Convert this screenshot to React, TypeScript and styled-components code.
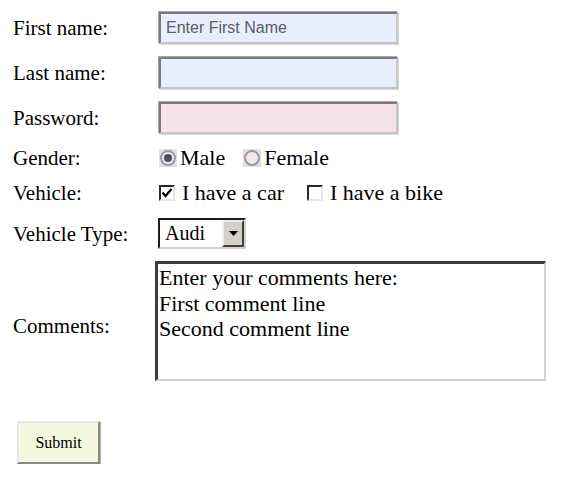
import React from "react";
import styled, { createGlobalStyle } from "styled-components";

const Global = createGlobalStyle`
  html, body { margin: 0; padding: 0; background: #fff; }
  body { font-family: "Liberation Serif", "Times New Roman", serif; color: #000; }
`;

const Form = styled.form`
  display: flex;
  flex-direction: column;
  padding: 12px 0 0 13px;
  width: 560px;
  box-sizing: border-box;
`;

const Row = styled.div<{ $h: number; $mt?: number }>`
  display: grid;
  grid-template-columns: 142px 1fr;
  align-items: center;
  height: ${(p) => p.$h}px;
  margin-top: ${(p) => p.$mt ?? 0}px;
`;

const Label = styled.span<{ $shift?: number }>`
  font-size: 21px;
  line-height: 24px;
  position: relative;
  top: ${(p) => p.$shift ?? 0}px;
`;

const Field = styled.div<{ $ml?: number }>`
  display: flex;
  align-items: center;
  margin-left: ${(p) => p.$ml ?? 0}px;
`;

const TextInput = styled.input<{ $bg: string }>`
  box-sizing: border-box;
  width: 239px;
  height: 32px;
  margin: 0;
  padding: 0 5px;
  background: ${(p) => p.$bg};
  border: 2px solid;
  border-color: #7a7a7a #c6c6c6 #c6c6c6 #7a7a7a;
  box-shadow: -1px -1px 0 #a8a8a8, 1px 1px 0 #d8d8d8;
  font-family: "Liberation Sans", Arial, sans-serif;
  font-size: 16px;
  color: #000;
  outline: none;
  &::placeholder { color: #5c5c66; opacity: 1; }
`;

const Choice = styled.label<{ $gap?: number }>`
  display: inline-flex;
  align-items: center;
  font-size: 22px;
  line-height: 24px;
  margin-right: ${(p) => p.$gap ?? 0}px;
`;

const RadioBox = styled.span<{ $fill: string }>`
  box-sizing: border-box;
  width: 18px;
  height: 18px;
  margin-right: 3px;
  display: inline-flex;
  align-items: center;
  justify-content: center;
  background: #dfe0ea;
  &::before {
    content: "";
    box-sizing: border-box;
    width: 16px;
    height: 16px;
    border-radius: 50%;
    border: 2px solid #9a9aa2;
    background: ${(p) => p.$fill};
  }
`;

const RadioDot = styled.span`
  position: absolute;
  left: 5px;
  top: 5px;
  width: 8px;
  height: 8px;
  border-radius: 50%;
  background: #4e4e56;
`;

const RadioWrap = styled.span`
  position: relative;
  display: inline-flex;
  align-items: center;
  justify-content: center;
`;

const CheckBox = styled.span`
  box-sizing: border-box;
  width: 16px;
  height: 16px;
  margin-right: 7px;
  background: #fff;
  border: 2px solid;
  border-color: #2a2a2a #e6e6e6 #e6e6e6 #2a2a2a;
  display: inline-flex;
  align-items: center;
  justify-content: center;
`;

const Select = styled.div`
  box-sizing: border-box;
  width: 88px;
  height: 31px;
  display: flex;
  align-items: center;
  border: 2px solid;
  border-color: #1e1e1e #d4d0c8 #d4d0c8 #1e1e1e;
  background: #fff;
`;

const SelectText = styled.span`
  flex: 1;
  padding-left: 5px;
  font-size: 20px;
  line-height: 23px;
`;

const ArrowButton = styled.span`
  box-sizing: border-box;
  width: 22px;
  height: 27px;
  background: #d4d0c8;
  border: 2px solid;
  border-color: #f0eee8 #404040 #404040 #f0eee8;
  display: flex;
  align-items: center;
  justify-content: center;
`;

const TextArea = styled.textarea`
  box-sizing: border-box;
  width: 391px;
  height: 120px;
  margin: 0;
  padding: 1px 1px;
  resize: none;
  border: solid;
  border-color: #3c3c3c #d4d0c8 #d4d0c8 #3c3c3c;
  border-width: 3px 2px 2px 3px;
  font-family: "Liberation Serif", "Times New Roman", serif;
  font-size: 22px;
  line-height: 25.5px;
  color: #000;
  outline: none;
  overflow: hidden;
`;

const SubmitButton = styled.button`
  box-sizing: border-box;
  width: 83px;
  height: 43px;
  margin-left: 4px;
  background: #f4f8de;
  border: 2px solid;
  border-color: #e8e8e0 #8a8a84 #8a8a84 #e8e8e0;
  box-shadow: 1px 1px 0 #b0b0a8;
  font-family: "Liberation Serif", "Times New Roman", serif;
  font-size: 16px;
  color: #000;
  padding: 0;
`;

const Radio = ({ checked, fill }: { checked?: boolean; fill: string }) => (
  <RadioWrap>
    <RadioBox $fill={fill} />
    {checked && <RadioDot />}
  </RadioWrap>
);

export default function App() {
  return (
    <>
      <Global />
      <Form onSubmit={(e) => e.preventDefault()}>
        <Row $h={32}>
          <Label>First name:</Label>
          <Field $ml={4}>
            <TextInput $bg="#e8eefe" placeholder="Enter First Name" />
          </Field>
        </Row>
        <Row $h={32} $mt={13}>
          <Label>Last name:</Label>
          <Field $ml={4}>
            <TextInput $bg="#e8eefe" />
          </Field>
        </Row>
        <Row $h={32} $mt={13}>
          <Label>Password:</Label>
          <Field $ml={4}>
            <TextInput $bg="#f6e2ea" type="password" />
          </Field>
        </Row>
        <Row $h={23} $mt={12}>
          <Label>Gender:</Label>
          <Field $ml={4}>
            <Choice $gap={18}>
              <Radio checked fill="#ebebf0" />
              Male
            </Choice>
            <Choice>
              <Radio fill="#f2e8e6" />
              Female
            </Choice>
          </Field>
        </Row>
        <Row $h={24} $mt={12}>
          <Label>Vehicle:</Label>
          <Field $ml={4}>
            <Choice $gap={23}>
              <CheckBox>
                <svg width="12" height="12" viewBox="0 0 12 12">
                  <path d="M1.5 5.5 L4.5 9 L10.5 2" fill="none" stroke="#000" strokeWidth="2.2" />
                </svg>
              </CheckBox>
              I have a car
            </Choice>
            <Choice>
              <CheckBox />
              I have a bike
            </Choice>
          </Field>
        </Row>
        <Row $h={31} $mt={13}>
          <Label>Vehicle Type:</Label>
          <Field $ml={3}>
            <Select>
              <SelectText>Audi</SelectText>
              <ArrowButton>
                <svg width="9" height="5" viewBox="0 0 9 5">
                  <path d="M0 0 H9 L4.5 5 Z" fill="#000" />
                </svg>
              </ArrowButton>
            </Select>
          </Field>
        </Row>
        <Row $h={120} $mt={12}>
          <Label $shift={5}>Comments:</Label>
          <Field>
            <TextArea
              defaultValue={"Enter your comments here:\nFirst comment line\nSecond comment line"}
            />
          </Field>
        </Row>
        <Row $h={43} $mt={40}>
          <Field>
            <SubmitButton type="submit">Submit</SubmitButton>
          </Field>
        </Row>
      </Form>
    </>
  );
}
